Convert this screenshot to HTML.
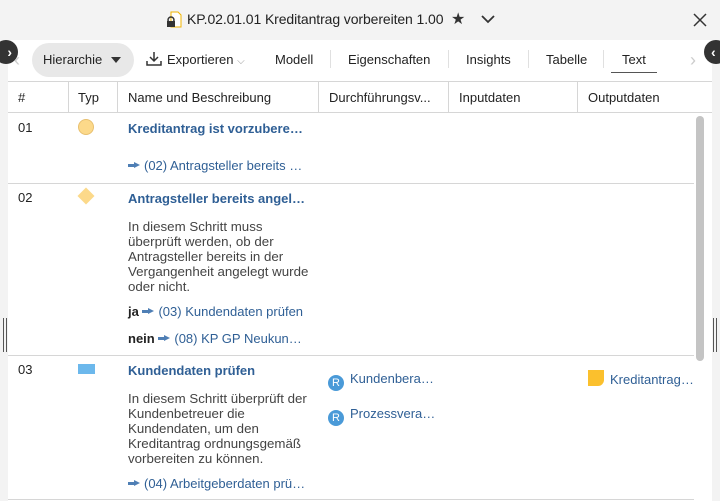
<!DOCTYPE html>
<html><head><style>
*{margin:0;padding:0;box-sizing:border-box}
body{width:720px;height:501px;background:#f3f3f3;font-family:"Liberation Sans",sans-serif;font-size:13px;color:#222;position:relative;overflow:hidden}
.a{position:absolute;white-space:nowrap}
.main{position:absolute;left:8px;top:40px;width:704px;height:461px;background:#fff}
.lnk{color:#2f5f95}
.b{font-weight:bold;color:#2f5f95}
.d{color:#444;line-height:15px;white-space:normal;font-size:13.3px}
.hl{position:absolute;height:1px;background:#d6d6d6}
.vl{position:absolute;width:1px;background:#d6d6d6;top:82px;height:30px}
.arr{display:inline-block;width:12px;height:7px;position:relative;margin-right:4px;vertical-align:1px}
.arr:before{content:"";position:absolute;left:0;top:2px;width:7px;height:3px;background:#4f7fb5}
.arr:after{content:"";position:absolute;left:6px;top:0;border-left:6px solid #4f7fb5;border-top:3.5px solid transparent;border-bottom:3.5px solid transparent}
.r{display:inline-block;width:16px;height:16px;border-radius:50%;background:#4a9ad8;color:#fff;font-size:11px;text-align:center;line-height:16px;margin-right:6px;vertical-align:-3px}
.sep{position:absolute;top:50px;width:1px;height:18px;background:#e0e0e0}
</style></head><body>
<svg class="a" style="left:165px;top:11px" width="18" height="18" viewBox="0 0 18 18"><path d="M6 1h7l3 3v12H6z" fill="#fff" stroke="#f0b400"/><circle cx="6" cy="9" r="3" fill="none" stroke="#333" stroke-width="1.5"/><rect x="2" y="10" width="8" height="6" fill="#333"/></svg>
<div class="a" style="left:187px;top:11px;font-size:14px;letter-spacing:-0.1px;color:#222">KP.02.01.01 Kreditantrag vorbereiten 1.00</div>
<div class="a" style="left:451px;top:9px;font-size:16px;color:#333">★</div>
<svg class="a" style="left:480px;top:13px" width="16" height="12"><path d="M2 3l6 6 6-6" fill="none" stroke="#333" stroke-width="1.8"/></svg>
<svg class="a" style="left:693px;top:13px" width="14" height="14"><path d="M1 1l12 12M13 1L1 13" stroke="#333" stroke-width="1.5"/></svg>
<div class="main"></div>
<div class="a" style="left:-6px;top:40px;width:24px;height:24px;border-radius:50%;background:#333;color:#fff;font-size:14px;line-height:24px;text-align:right;padding-right:6px;font-weight:bold">›</div>
<div class="a" style="left:704px;top:40px;width:24px;height:24px;border-radius:50%;background:#333;color:#fff;font-size:14px;line-height:24px;padding-left:7px;font-weight:bold">‹</div>
<div class="a" style="left:14px;top:50px;color:#ccc;font-size:18px">‹</div>
<div class="a" style="left:690px;top:50px;color:#ccc;font-size:18px">›</div>
<div class="a" style="left:32px;top:43px;width:102px;height:34px;border-radius:17px;background:#e8e8e8"></div>
<div class="a" style="left:43px;top:52px">Hierarchie</div>
<div class="a" style="left:111px;top:57px;border-top:6px solid #333;border-left:5px solid transparent;border-right:5px solid transparent"></div>
<svg class="a" style="left:145px;top:50px" width="18" height="18"><path d="M9 2v9M5 7l4 4 4-4M2 11v4h14v-4" fill="none" stroke="#333" stroke-width="1.5"/></svg>
<div class="a" style="left:167px;top:52px">Exportieren <span style="color:#999;font-size:10px">⌵</span></div>
<div class="a" style="left:275px;top:52px">Modell</div><div class="sep" style="left:330px"></div>
<div class="a" style="left:348px;top:52px">Eigenschaften</div><div class="sep" style="left:448px"></div>
<div class="a" style="left:466px;top:52px">Insights</div><div class="sep" style="left:528px"></div>
<div class="a" style="left:546px;top:52px">Tabelle</div><div class="sep" style="left:603px"></div>
<div class="a" style="left:622px;top:52px">Text</div>
<div class="a" style="left:611px;top:72px;width:46px;height:1px;background:#555"></div>
<div class="hl" style="left:8px;top:81px;width:704px"></div>
<div class="vl" style="left:68px"></div><div class="vl" style="left:117px"></div><div class="vl" style="left:318px"></div><div class="vl" style="left:448px"></div><div class="vl" style="left:577px"></div>
<div class="a" style="left:18px;top:90px">#</div>
<div class="a" style="left:78px;top:90px">Typ</div>
<div class="a" style="left:128px;top:90px">Name und Beschreibung</div>
<div class="a" style="left:329px;top:90px">Durchführungsv...</div>
<div class="a" style="left:459px;top:90px">Inputdaten</div>
<div class="a" style="left:588px;top:90px">Outputdaten</div>
<div class="hl" style="left:8px;top:112px;width:704px"></div>
<div class="a" style="left:696px;top:116px;width:8px;height:245px;border-radius:4px;background:#c4c4c4"></div>
<div class="a" style="left:18px;top:120px">01</div>
<div class="a" style="left:78px;top:119px;width:16px;height:16px;border-radius:50%;background:#fcd98a;border:1px solid #e8c070"></div>
<div class="a b" style="left:128px;top:121px">Kreditantrag ist vorzubere…</div>
<div class="a lnk" style="left:128px;top:158px"><span class="arr"></span>(02) Antragsteller bereits …</div>
<div class="hl" style="left:8px;top:183px;width:686px"></div>
<div class="a" style="left:18px;top:190px">02</div>
<div class="a" style="left:80px;top:190px;width:12px;height:12px;background:#fcd98a;transform:rotate(45deg)"></div>
<div class="a b" style="left:128px;top:191px">Antragsteller bereits angel…</div>
<div class="a d" style="left:128px;top:219px;width:182px">In diesem Schritt muss überprüft werden, ob der Antragsteller bereits in der Vergangenheit angelegt wurde oder nicht.</div>
<div class="a lnk" style="left:128px;top:304px"><b style="color:#222">ja</b> <span class="arr"></span>(03) Kundendaten prüfen</div>
<div class="a lnk" style="left:128px;top:331px"><b style="color:#222">nein</b> <span class="arr"></span>(08) KP GP Neukun…</div>
<div class="hl" style="left:8px;top:355px;width:686px"></div>
<div class="a" style="left:18px;top:362px">03</div>
<div class="a" style="left:78px;top:364px;width:17px;height:10px;background:#6cb8ec"></div>
<div class="a b" style="left:128px;top:363px">Kundendaten prüfen</div>
<div class="a d" style="left:128px;top:391px;width:182px">In diesem Schritt überprüft der Kundenbetreuer die Kundendaten, um den Kreditantrag ordnungsgemäß vorbereiten zu können.</div>
<div class="a lnk" style="left:128px;top:476px"><span class="arr"></span>(04) Arbeitgeberdaten prü…</div>
<div class="a lnk" style="left:328px;top:371px"><span class="r">R</span>Kundenbera…</div>
<div class="a lnk" style="left:328px;top:406px"><span class="r">R</span>Prozessvera…</div>
<div class="a" style="left:588px;top:370px;width:16px;height:16px;background:#fbc02d;border-radius:0 0 6px 0"></div>
<div class="a lnk" style="left:610px;top:372px">Kreditantrag…</div>
<div class="hl" style="left:8px;top:499px;width:686px"></div>
<div class="a" style="left:3px;top:318px;width:4px;height:34px;border-left:1px solid #555;border-right:1px solid #555"></div>
<div class="a" style="left:713px;top:318px;width:4px;height:34px;border-left:1px solid #555;border-right:1px solid #555"></div>
</body></html>
